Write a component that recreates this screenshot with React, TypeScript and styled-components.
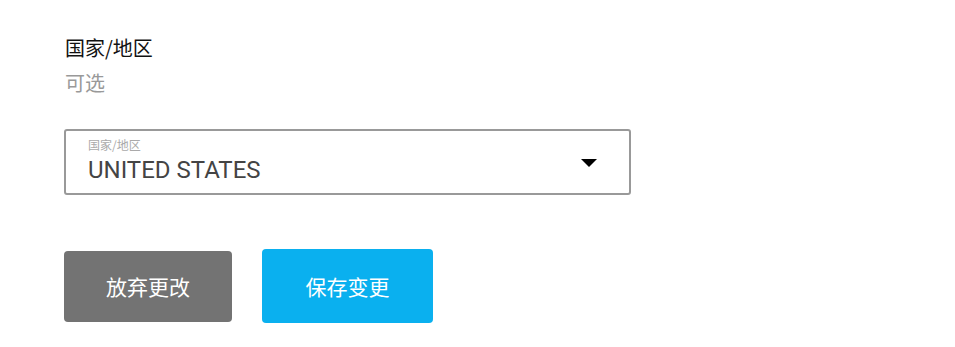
import React from "react";
import styled, { createGlobalStyle } from "styled-components";

const Global = createGlobalStyle`
  html, body { margin: 0; padding: 0; background: #fff; }
  body { font-family: "Microsoft YaHei", "Noto Sans CJK SC", "Noto Sans", sans-serif; }
`;

const Page = styled.div`
  padding: 36px 0 0 64px;
  width: 567px;
`;

const Title = styled.div`
  font-size: 20px;
  line-height: 24px;
  color: #111;
  padding-left: 1px;
`;

const Hint = styled.div`
  font-size: 20px;
  line-height: 24px;
  color: #999;
  margin-top: 11px;
  padding-left: 1px;
`;

const SelectBox = styled.div`
  margin-top: 34px;
  height: 62px;
  border: 2px solid #999;
  border-radius: 3px;
  display: flex;
  align-items: center;
  padding: 0 32px 0 22px;
  box-sizing: content-box;
  width: 509px;
`;

const SelectText = styled.div`
  flex: 1;
  display: flex;
  flex-direction: column;
`;

const SmallLabel = styled.div`
  font-size: 12px;
  line-height: 14px;
  color: #aaa;
  margin-top: -3px;
`;

const Value = styled.div`
  font-family: Roboto, "Noto Sans", sans-serif;
  font-size: 24px;
  line-height: 28px;
  color: #444;
  margin-top: 4px;
`;

const Arrow = styled.div`
  width: 0;
  height: 0;
  border-left: 8px solid transparent;
  border-right: 8px solid transparent;
  border-top: 8px solid #000;
  margin-top: 2px;
`;

const Buttons = styled.div`
  display: flex;
  align-items: center;
  gap: 30px;
  margin-top: 54px;
`;

const Button = styled.button<{ $primary?: boolean }>`
  border: none;
  border-radius: 4px;
  width: ${(p) => (p.$primary ? "171px" : "168px")};
  height: ${(p) => (p.$primary ? "74px" : "71px")};
  background: ${(p) => (p.$primary ? "#0ab0ef" : "#737373")};
  color: #fff;
  font-family: "Microsoft YaHei", "Noto Sans CJK SC", sans-serif;
  font-size: 21px;
  padding: 0;
  cursor: pointer;
`;

export default function App() {
  return (
    <>
      <Global />
      <Page>
        <Title>国家/地区</Title>
        <Hint>可选</Hint>
        <SelectBox>
          <SelectText>
            <SmallLabel>国家/地区</SmallLabel>
            <Value>UNITED STATES</Value>
          </SelectText>
          <Arrow />
        </SelectBox>
        <Buttons>
          <Button>放弃更改</Button>
          <Button $primary>保存变更</Button>
        </Buttons>
      </Page>
    </>
  );
}
